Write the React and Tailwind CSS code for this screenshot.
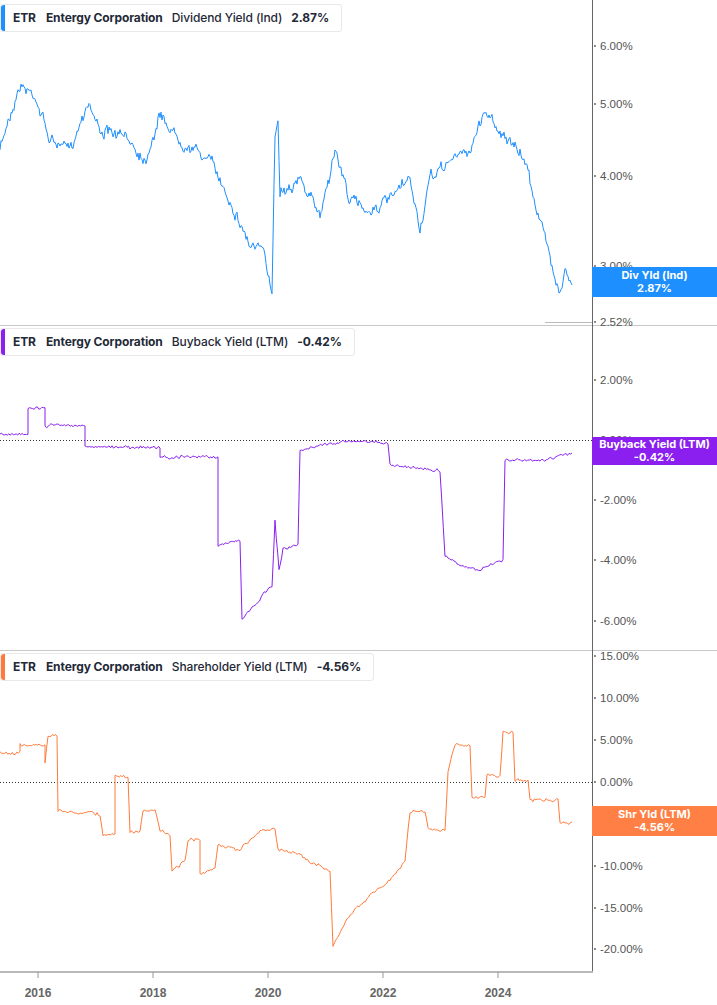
import React from "react";

function rng(seed){let s=seed;return()=>{s=(s*16807)%2147483647;return s/2147483647;};}
function noisy(pts,amp,jit,seed,step=1.2){const r=rng(seed);let out=[];let w=0;
  for(let i=0;i<pts.length-1;i++){const [x1,y1]=pts[i],[x2,y2]=pts[i+1];const n=Math.max(1,Math.round((x2-x1)/step));
    for(let k=0;k<n;k++){const t=k/n;w=w*0.75+(r()-0.5)*amp;out.push([x1+(x2-x1)*t,y1+(y2-y1)*t+w+(r()-0.5)*jit]);}}
  out.push(pts[pts.length-1]);return "M"+out.map(p=>p[0].toFixed(1)+","+p[1].toFixed(1)).join("L");}

const p1=[[0,150],[8,120],[20,85],[35,95],[50,140],[70,150],[88,100],[100,130],[130,140],[145,160],[160,115],[180,140],[210,160],[230,200],[250,245],[262,250],[272,290],[275,130],[278,120],[280,190],[300,180],[320,215],[335,150],[350,200],[370,210],[390,200],[410,180],[420,230],[430,180],[450,160],[470,150],[485,110],[500,130],[515,150],[525,160],[540,220],[555,275],[560,290],[565,270],[572,285]];
const p2=[[0,435],[28,435],[28,407],[45,407],[45,425],[85,425],[85,447],[160,447],[160,457],[218,457],[218,545],[240,540],[242,620],[255,605],[272,585],[275,520],[279,570],[283,548],[298,545],[300,450],[340,441],[388,443],[390,465],[440,470],[445,555],[460,565],[480,570],[503,560],[505,460],[540,461],[572,453]];
const p3=[[0,752],[20,752],[20,745],[45,745],[45,762],[48,735],[57,735],[58,810],[100,815],[103,835],[115,835],[115,777],[128,777],[130,832],[140,832],[143,810],[155,810],[160,830],[170,835],[172,870],[185,862],[188,840],[200,840],[200,875],[215,868],[218,845],[240,850],[260,830],[275,830],[278,850],[300,855],[318,865],[330,870],[333,945],[350,915],[370,895],[390,880],[405,860],[410,812],[425,812],[428,830],[445,830],[448,770],[455,745],[470,745],[472,798],[485,798],[487,775],[500,775],[503,732],[513,732],[515,780],[528,780],[530,800],[558,800],[560,823],[572,822]];

const d1=noisy(p1,6,7,7,1);
const d2=noisy(p2,1.5,2.5,11,1.5);
const d3=noisy(p3,1.5,2.5,13,1.5);

const ticks=[[46,"6.00%"],[104,"5.00%"],[176,"4.00%"],[266,"3.00%"],[322,"2.52%"],[380,"2.00%"],[440,"0.00%"],[500,"-2.00%"],[560,"-4.00%"],[621,"-6.00%"],[656,"15.00%"],[698,"10.00%"],[740,"5.00%"],[782,"0.00%"],[824,"-5.00%"],[866,"-10.00%"],[908,"-15.00%"],[949,"-20.00%"]];
const years=[[38,"2016"],[153,"2018"],[268,"2020"],[383,"2022"],[498,"2024"]];

function Header({top,color,metric,value}){return(
  <div className="absolute left-0 flex items-center h-[28px] bg-white border border-[#e8e8e8] rounded-[3px] pr-[12px] text-[12px] text-[#1f2937] tracking-[-0.1px]" style={{top}}>
    <div className="w-[4px] h-full rounded-l-[3px]" style={{background:color}}/>
    <span className="font-bold ml-[8px]">ETR</span>
    <span className="font-bold ml-[10px]">Entergy Corporation</span>
    <span className="ml-[9px] font-medium">{metric}</span>
    <span className="ml-[9px] font-bold">{value}</span>
  </div>);}

function Label({top,h,bg,a,b}){return(
  <div className="absolute left-[592px] w-[125px] flex flex-col items-center justify-center text-white text-[11px] font-bold leading-[13px]" style={{top,height:h,background:bg}}>
    <div>{a}</div><div>{b}</div></div>);}

export default function App(){
  return(
  <div className="relative w-[717px] h-[1005px] bg-white overflow-hidden" style={{fontFamily:"Inter, 'Liberation Sans', sans-serif"}}>
    <svg width="717" height="1005" className="absolute left-0 top-0">
      <line x1="0" y1="325.5" x2="717" y2="325.5" stroke="#c8c8c8"/>
      <line x1="0" y1="650.5" x2="717" y2="650.5" stroke="#c8c8c8"/>
      <line x1="592.5" y1="0" x2="592.5" y2="972" stroke="#666"/>
      <line x1="0" y1="972" x2="593" y2="972" stroke="#b8b8b8" strokeWidth="2"/>
      <line x1="0" y1="440.5" x2="592" y2="440.5" stroke="#333" strokeDasharray="1 2"/>
      <line x1="0" y1="782.5" x2="592" y2="782.5" stroke="#333" strokeDasharray="1 2"/>
      <line x1="545" y1="322.5" x2="592" y2="322.5" stroke="#bbb"/>
      {ticks.map(([y,t])=>(<g key={t+y}><circle cx="595" cy={y} r="1" fill="#666"/><text x="600" y={y+4} fontSize="11.5" fill="#555" fontFamily="'Liberation Sans', sans-serif">{t}</text></g>))}
      {years.map(([x,t])=>(<g key={t}><line x1={x} y1="972" x2={x} y2="978" stroke="#999"/><text x={x} y="997" fontSize="12" fontWeight="bold" fill="#666" textAnchor="middle" fontFamily="'Liberation Sans', sans-serif">{t}</text></g>))}
      <path d={d1} fill="none" stroke="#1e8fff" strokeWidth="1"/>
      <path d={d2} fill="none" stroke="#8a1ff0" strokeWidth="1"/>
      <path d={d3} fill="none" stroke="#ff7a3a" strokeWidth="1"/>
    </svg>
    <Header top={4} color="#1e8fff" metric="Dividend Yield (Ind)" value="2.87%"/>
    <Header top={328} color="#8a1ff0" metric="Buyback Yield (LTM)" value="-0.42%"/>
    <Header top={653} color="#ff7a3a" metric="Shareholder Yield (LTM)" value="-4.56%"/>
    <Label top={267} h={30} bg="#1e8fff" a="Div Yld (Ind)" b="2.87%"/>
    <Label top={437} h={28} bg="#8a1ff0" a="Buyback Yield (LTM)" b="-0.42%"/>
    <Label top={806} h={30} bg="#ff7f45" a="Shr Yld (LTM)" b="-4.56%"/>
  </div>);
}
